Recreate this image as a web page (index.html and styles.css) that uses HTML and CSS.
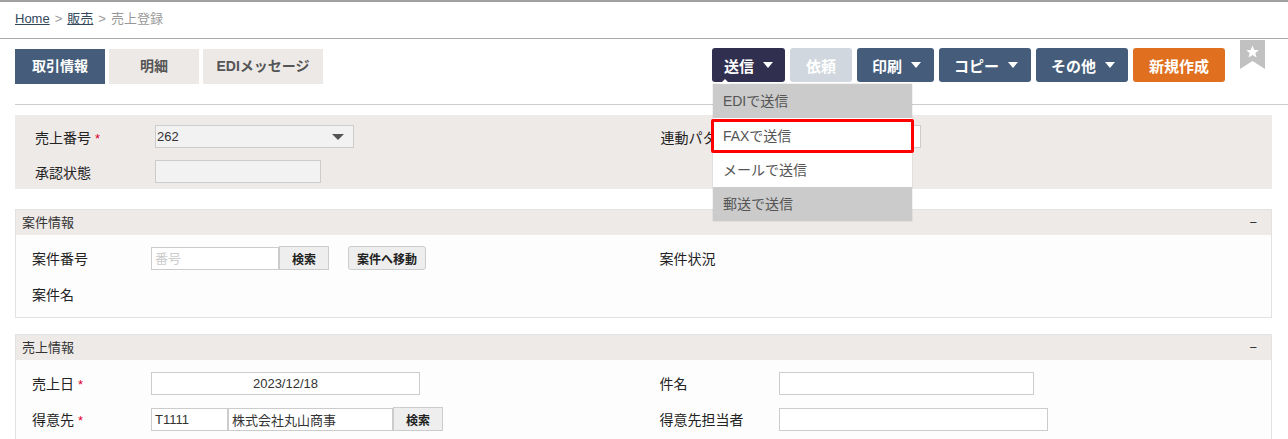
FILE: index.html
```html
<!DOCTYPE html>
<html>

<head>
    <meta charset="UTF-8">
    <title>売上登録</title>
    <link rel="stylesheet" href="styles.css">
</head>

<body>
    <div class="breadcrumb">
        <a href="#">Home</a><span class="sep">&gt;</span><a href="#">販売</a><span class="sep">&gt;</span><span class="current">売上登録</span>
    </div>

    <div class="page">
        <div class="toolbar">
            <div class="tabs">
                <div class="tab active">取引情報</div>
                <div class="tab">明細</div>
                <div class="tab wide">EDIメッセージ</div>
            </div>
            <div class="actions">
                <div class="send-wrap">
                    <button class="btn btn-send">送信<span class="caret"></span></button>
                    <ul class="dropdown">
                        <li class="gray">EDIで送信</li>
                        <li class="selected">FAXで送信</li>
                        <li>メールで送信</li>
                        <li class="gray">郵送で送信</li>
                    </ul>
                </div>
                <button class="btn btn-disabled">依頼</button>
                <button class="btn">印刷<span class="caret"></span></button>
                <button class="btn">コピー<span class="caret"></span></button>
                <button class="btn">その他<span class="caret"></span></button>
                <button class="btn btn-new">新規作成</button>
                <div class="bookmark">
                    <svg width="25" height="29" viewBox="0 0 25 29">
                        <polygon points="0,0 25,0 25,29 12.5,21 0,29" fill="#c1c1c1" />
                        <polygon points="12.5,5.5 14.3,10 18.8,10.2 15.3,13 16.5,17.4 12.5,14.9 8.5,17.4 9.7,13 6.2,10.2 10.7,10" fill="#fff" />
                    </svg>
                </div>
            </div>
        </div>

        <hr class="divider">

        <div class="head-form">
            <div class="col">
                <div class="row">
                    <label>売上番号 <span class="req">*</span></label>
                    <div class="select"><span>262</span><span class="arrow"></span></div>
                </div>
                <div class="row">
                    <label>承認状態</label>
                    <input type="text" class="input gray w166">
                </div>
            </div>
            <div class="col">
                <div class="row">
                    <label>連動パターン</label>
                    <input type="text" class="input w140">
                </div>
            </div>
        </div>

        <div class="panel">
            <div class="panel-head"><span>案件情報</span><span class="toggle">−</span></div>
            <div class="panel-body">
                <div class="col">
                    <div class="row">
                        <label>案件番号</label>
                        <input type="text" class="input w128" placeholder="番号">
                        <button class="small-btn">検索</button>
                        <button class="small-btn round">案件へ移動</button>
                    </div>
                    <div class="row">
                        <label>案件名</label>
                    </div>
                </div>
                <div class="col">
                    <div class="row">
                        <label>案件状況</label>
                    </div>
                </div>
            </div>
        </div>

        <div class="panel">
            <div class="panel-head"><span>売上情報</span><span class="toggle">−</span></div>
            <div class="panel-body">
                <div class="col">
                    <div class="row">
                        <label>売上日 <span class="req">*</span></label>
                        <input type="text" class="input w269 center" value="2023/12/18">
                    </div>
                    <div class="row">
                        <label>得意先 <span class="req">*</span></label>
                        <input type="text" class="input w77" value="T1111">
                        <input type="text" class="input w165" value="株式会社丸山商事">
                        <button class="small-btn">検索</button>
                    </div>
                </div>
                <div class="col">
                    <div class="row">
                        <label>件名</label>
                        <input type="text" class="input w255">
                    </div>
                    <div class="row">
                        <label>得意先担当者</label>
                        <input type="text" class="input w269">
                    </div>
                </div>
            </div>
        </div>
    </div>
</body>

</html>
```

FILE: styles.css
```css
body {
    font-family: "Liberation Sans", "Noto Sans CJK JP", sans-serif;
    font-size: 14px;
    color: #222;
    margin: 0;
    border-top: 2px solid #a0a0a0;
    background-color: #fff;
    overflow: hidden;
}

.breadcrumb {
    height: 36px;
    line-height: 33px;
    padding-left: 15px;
    border-bottom: 1px solid #aaa;
    font-size: 13px;
    color: #999;
}

.breadcrumb a {
    color: #34495e;
    text-decoration: underline;
}

.breadcrumb .sep {
    margin: 0 5px;
    color: #999;
}

.page {
    padding: 0 16px 0 15px;
}

.toolbar {
    display: flex;
    justify-content: space-between;
    margin-top: 9px;
    height: 36px;
}

.tabs {
    display: flex;
    gap: 4px;
    padding-top: 1px;
}

.tab {
    width: 90px;
    height: 35px;
    line-height: 35px;
    text-align: center;
    background-color: #ede9e7;
    color: #555;
    font-weight: bold;
    font-size: 14px;
}

.tab.wide {
    width: 120px;
}

.tab.active {
    background-color: #455d7a;
    color: #fff;
}

.actions {
    display: flex;
    gap: 5px;
    align-items: flex-start;
}

.btn {
    height: 34px;
    padding: 0 13px 0 15px;
    border: none;
    border-radius: 3px;
    background-color: #455d7a;
    color: #fff;
    font-family: inherit;
    font-size: 15px;
    font-weight: bold;
    display: flex;
    align-items: center;
    cursor: pointer;
}

.btn-send {
    background-color: #312f4f;
    padding-left: 12px;
    padding-right: 12px;
}

.btn-disabled {
    background-color: #d0d7de;
    padding: 0 16px;
}

.btn-new {
    background-color: #e07020;
    padding: 0 16px;
}

.caret {
    display: inline-block;
    margin-left: 9px;
    border-left: 5px solid transparent;
    border-right: 5px solid transparent;
    border-top: 6px solid #fff;
}

.bookmark {
    margin: -8px 7px 0 10px;
}

.send-wrap {
    position: relative;
}

.dropdown {
    position: absolute;
    top: 36px;
    left: 1px;
    width: 199px;
    margin: 0;
    padding: 0;
    list-style: none;
    background-color: #fff;
    box-shadow: 0 0 1px rgba(0, 0, 0, 0.3);
    z-index: 10;
}

.dropdown::before {
    content: "";
    position: absolute;
    top: -5px;
    left: 7px;
    border-left: 5px solid transparent;
    border-right: 5px solid transparent;
    border-bottom: 5px solid #fff;
}

.dropdown li {
    height: 34px;
    line-height: 34px;
    padding-left: 10px;
    color: #555;
    font-size: 14px;
}

.dropdown li.gray {
    background-color: #cbcbcb;
}

.dropdown li.selected {
    height: 28px;
    line-height: 28px;
    margin: 1px -2px 0 -2px;
    padding-left: 9px;
    border: 3px solid #f00;
    border-radius: 2px;
}

.divider {
    border: none;
    border-top: 1px solid #ccc;
    margin: 20px -16px 0 0;
}

.head-form {
    display: grid;
    grid-template-columns: 1fr 1fr;
    margin-top: 10px;
    padding: 10px 0 6px;
    background-color: #eeeae8;
}

.col {
    padding-left: 17px;
}

.head-form .col:first-child {
    padding-left: 20px;
}

.row {
    display: flex;
    align-items: center;
    height: 23px;
    margin-bottom: 12px;
}

.row:last-child {
    margin-bottom: 0;
}

.row label {
    width: 120px;
    flex-shrink: 0;
}

.req {
    color: #e0002a;
    font-size: 13px;
}

.select {
    width: 196px;
    height: 21px;
    border: 1px solid #ccc;
    background-color: #f2f2f2;
    display: flex;
    align-items: center;
    justify-content: space-between;
    font-size: 13px;
    color: #333;
    padding-left: 1px;
}

.select .arrow {
    margin-right: 9px;
    border-left: 6px solid transparent;
    border-right: 6px solid transparent;
    border-top: 6px solid #555;
}

.input {
    height: 23px;
    box-sizing: border-box;
    border: 1px solid #ccc;
    background-color: #fff;
    font-family: inherit;
    font-size: 13px;
    color: #333;
    padding: 0 3px;
    margin: 0;
}

.input::placeholder {
    color: #ccc;
}

.input.gray {
    background-color: #f2f2f2;
}

.input.center {
    text-align: center;
}

.w77 { width: 77px; }
.w128 { width: 128px; }
.w140 { width: 140px; }
.w165 { width: 165px; }
.w166 { width: 166px; }
.w255 { width: 255px; }
.w269 { width: 269px; }

.panel {
    margin-top: 20px;
    border: 1px solid #e2e2e2;
    background-color: #fdfdfd;
}

.panel + .panel {
    margin-top: 16px;
}

.panel-head {
    display: flex;
    justify-content: space-between;
    height: 25px;
    line-height: 25px;
    padding: 0 14px 0 6px;
    background-color: #eeeae8;
    font-size: 13px;
    color: #333;
}

.panel-body {
    display: grid;
    grid-template-columns: 1fr 1fr;
    padding: 11px 0 11px;
}

.panel-body .col {
    padding-left: 16px;
}

.panel-body .row {
    height: 24px;
}

.panel-body label {
    width: 119px;
}

.small-btn {
    height: 24px;
    padding: 0 12px;
    border: 1px solid #ccc;
    background-color: #eee;
    font-family: inherit;
    font-size: 12px;
    font-weight: bold;
    color: #222;
    cursor: pointer;
}

.small-btn.round {
    margin-left: 19px;
    border-radius: 3px;
    padding: 0 8px;
}
```
